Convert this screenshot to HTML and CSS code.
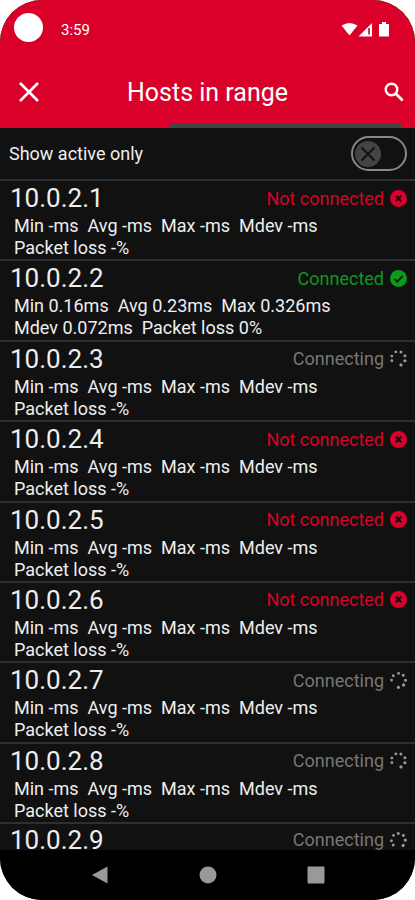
FILE: index.html
```html
<!DOCTYPE html>
<html lang="en">
<head>
    <meta charset="UTF-8">
    <meta name="viewport" content="width=device-width, initial-scale=1.0">
    <title>Hosts in range</title>
    <link rel="stylesheet" href="styles.css">
</head>
<body>

    <svg class="symbols" aria-hidden="true">
        <symbol id="icon-fail" viewBox="0 0 18 18">
            <circle cx="9" cy="9" r="9" fill="currentColor"/>
            <path d="M6.2 6.2l5.6 5.6M11.8 6.2l-5.6 5.6" stroke="#111" stroke-width="2.2" fill="none"/>
        </symbol>
        <symbol id="icon-ok" viewBox="0 0 18 18">
            <circle cx="9" cy="9" r="9" fill="currentColor"/>
            <path d="M4.6 9.4l3 3 5.8-6" stroke="#111" stroke-width="1.8" fill="none"/>
        </symbol>
        <symbol id="icon-wait" viewBox="0 0 18 18">
            <g fill="#999">
                <circle cx="6.2" cy="2" r="1.5"/>
                <circle cx="11.6" cy="2" r="1.6"/>
                <circle cx="15.8" cy="6" r="1.6"/>
                <circle cx="15.8" cy="11.4" r="1.7"/>
                <circle cx="11.6" cy="15.8" r="1.7"/>
                <circle cx="2" cy="11.4" r="1.5"/>
                <circle cx="2" cy="6.4" r="1.5"/>
            </g>
        </symbol>
    </svg>

    <div class="screen">
        <header class="header">
            <div class="status-bar">
                <span class="camera"></span>
                <span class="clock">3:59</span>
                <svg class="system-icons" viewBox="0 0 48 16" aria-hidden="true">
                    <path d="M0.5 3.6Q8.5 -1.5 16.5 3.6L8.5 13.5z" fill="#fff"/>
                    <path d="M17.5 14.5L31 1V14.5z" fill="#fff"/>
                    <path d="M28 6V12.5" stroke="#8f1a2c" stroke-width="1.6"/>
                    <path d="M38 2h3V0h4v2h3v12.5H38z" fill="#fff"/>
                </svg>
            </div>
            <div class="toolbar">
                <button class="icon-button" aria-label="Close">
                    <svg viewBox="0 0 20 20"><path d="M1 1l18 18M19 1L1 19" stroke="#fff" stroke-width="2.6" fill="none"/></svg>
                </button>
                <h1>Hosts in range</h1>
                <button class="icon-button" aria-label="Search">
                    <svg viewBox="0 0 20 20"><circle cx="7.5" cy="7.5" r="5.8" stroke="#fff" stroke-width="2.4" fill="none"/><path d="M11.6 11.6l7 7" stroke="#fff" stroke-width="2.8" fill="none"/></svg>
                </button>
            </div>
            <div class="progress"></div>
        </header>

        <div class="filter">
            <label for="active-only">Show active only</label>
            <span class="switch">
                <input type="checkbox" id="active-only">
                <svg viewBox="0 0 26 26" aria-hidden="true">
                    <circle cx="13" cy="13" r="13" fill="#444"/>
                    <path d="M6.5 6.5l13 13M19.5 6.5l-13 13" stroke="#111" stroke-width="2" fill="none"/>
                </svg>
            </span>
        </div>

        <ul class="hosts">
            <li>
                <div class="host"><h2>10.0.2.1</h2><span class="state fail">Not connected <svg><use href="#icon-fail"/></svg></span></div>
                <div class="stats"><span>Min -ms</span><span>Avg -ms</span><span>Max -ms</span><span>Mdev -ms</span><span>Packet loss -%</span></div>
            </li>
            <li>
                <div class="host"><h2>10.0.2.2</h2><span class="state ok">Connected <svg><use href="#icon-ok"/></svg></span></div>
                <div class="stats"><span>Min 0.16ms</span><span>Avg 0.23ms</span><span>Max 0.326ms</span><span>Mdev 0.072ms</span><span>Packet loss 0%</span></div>
            </li>
            <li>
                <div class="host"><h2>10.0.2.3</h2><span class="state">Connecting <svg><use href="#icon-wait"/></svg></span></div>
                <div class="stats"><span>Min -ms</span><span>Avg -ms</span><span>Max -ms</span><span>Mdev -ms</span><span>Packet loss -%</span></div>
            </li>
            <li>
                <div class="host"><h2>10.0.2.4</h2><span class="state fail">Not connected <svg><use href="#icon-fail"/></svg></span></div>
                <div class="stats"><span>Min -ms</span><span>Avg -ms</span><span>Max -ms</span><span>Mdev -ms</span><span>Packet loss -%</span></div>
            </li>
            <li>
                <div class="host"><h2>10.0.2.5</h2><span class="state fail">Not connected <svg><use href="#icon-fail"/></svg></span></div>
                <div class="stats"><span>Min -ms</span><span>Avg -ms</span><span>Max -ms</span><span>Mdev -ms</span><span>Packet loss -%</span></div>
            </li>
            <li>
                <div class="host"><h2>10.0.2.6</h2><span class="state fail">Not connected <svg><use href="#icon-fail"/></svg></span></div>
                <div class="stats"><span>Min -ms</span><span>Avg -ms</span><span>Max -ms</span><span>Mdev -ms</span><span>Packet loss -%</span></div>
            </li>
            <li>
                <div class="host"><h2>10.0.2.7</h2><span class="state">Connecting <svg class="step-next"><use href="#icon-wait"/></svg></span></div>
                <div class="stats"><span>Min -ms</span><span>Avg -ms</span><span>Max -ms</span><span>Mdev -ms</span><span>Packet loss -%</span></div>
            </li>
            <li>
                <div class="host"><h2>10.0.2.8</h2><span class="state">Connecting <svg><use href="#icon-wait"/></svg></span></div>
                <div class="stats"><span>Min -ms</span><span>Avg -ms</span><span>Max -ms</span><span>Mdev -ms</span><span>Packet loss -%</span></div>
            </li>
            <li class="last">
                <div class="host"><h2>10.0.2.9</h2><span class="state">Connecting <svg class="step-back"><use href="#icon-wait"/></svg></span></div>
            </li>
        </ul>

        <nav class="nav-bar">
            <button aria-label="Back"><svg viewBox="0 0 18 18"><path d="M16.5 0.5v17L1 9z" fill="#999"/></svg></button>
            <button aria-label="Home"><svg viewBox="0 0 18 18"><circle cx="9" cy="9" r="8.5" fill="#999"/></svg></button>
            <button aria-label="Recent apps"><svg viewBox="0 0 18 18"><rect x="0.5" y="0.5" width="17" height="17" rx="1" fill="#999"/></svg></button>
        </nav>
    </div>

</body>
</html>
```
FILE: styles.css
```css
* {
    box-sizing: border-box;
}
body {
    margin: 0;
    background: #fff;
    color: #eee;
    font-family: Roboto, sans-serif;
}
button {
    padding: 0;
    border: none;
    background: none;
    cursor: pointer;
}
svg {
    display: block;
}
.symbols {
    display: none;
}
.screen {
    display: flex;
    flex-direction: column;
    min-height: 100vh;
    border-radius: 42px;
    background: #111;
    overflow: hidden;
}

/* header */
.header {
    background: #db0029;
    color: #fff;
}
.status-bar {
    display: flex;
    align-items: center;
    height: 60px;
    padding: 0 26px 0 14px;
}
.camera {
    width: 29px;
    height: 29px;
    margin: 0 18px 6px 0;
    border-radius: 50%;
    background: #fff;
}
.clock {
    font-size: 15px;
}
.system-icons {
    width: 48px;
    height: 16px;
    margin-left: auto;
}
.toolbar {
    display: grid;
    grid-template-columns: 1fr auto 1fr;
    align-items: center;
    height: 64px;
    padding: 0 11px;
}
.icon-button {
    justify-self: start;
    margin-left: 8px;
}
.icon-button:last-child {
    justify-self: end;
}
.icon-button svg {
    width: 20px;
    height: 20px;
}
h1 {
    margin: 0;
    font-size: 25px;
    font-weight: 400;
}
.progress {
    height: 4px;
    margin: 0 13px 0 169px;
    background: #444;
}

/* filter row */
.filter {
    display: flex;
    align-items: center;
    justify-content: space-between;
    height: 51px;
    padding: 0 8px 0 9px;
    font-size: 18px;
}
.switch {
    display: flex;
    align-items: center;
    position: relative;
}
.switch input {
    appearance: none;
    width: 56px;
    height: 35px;
    margin: 0;
    border: 2px solid #888;
    border-radius: 18px;
    cursor: pointer;
}
.switch svg {
    position: absolute;
    left: 4px;
    width: 26px;
    height: 26px;
    pointer-events: none;
}
.switch input:checked + svg {
    left: 26px;
}

/* list of hosts */
.hosts {
    display: flex;
    flex: 1;
    flex-direction: column;
    margin: 0;
    padding: 0;
    list-style: none;
}
.hosts li {
    flex: 1 0 80px;
    border-top: 2px solid #2f2f32;
}
.hosts .last {
    flex: 0 0 28px;
}
.host {
    display: flex;
    align-items: center;
    justify-content: space-between;
    height: 34px;
    padding: 0 8px 0 10px;
}
.last .host {
    height: 26px;
    padding-top: 6px;
    line-height: 20px;
}
h2 {
    margin: 0;
    font-size: 26px;
    font-weight: 400;
}
.state {
    display: flex;
    align-items: center;
    gap: 6px;
    color: #777;
    font-size: 18px;
}
.state svg {
    width: 17px;
    height: 17px;
}
.state .step-next {
    transform: rotate(22deg);
}
.state .step-back {
    transform: rotate(-22deg);
}
.fail {
    color: #db0029;
}
.ok {
    color: #0a9a1c;
}
.stats {
    display: flex;
    flex-wrap: wrap;
    column-gap: 9px;
    padding: 0 60px 0 14px;
    font-size: 18px;
    line-height: 22px;
}

/* system navigation */
.nav-bar {
    display: flex;
    align-items: center;
    justify-content: center;
    gap: 90px;
    height: 50px;
    background: #000;
}
.nav-bar svg {
    width: 18px;
    height: 18px;
}
```
